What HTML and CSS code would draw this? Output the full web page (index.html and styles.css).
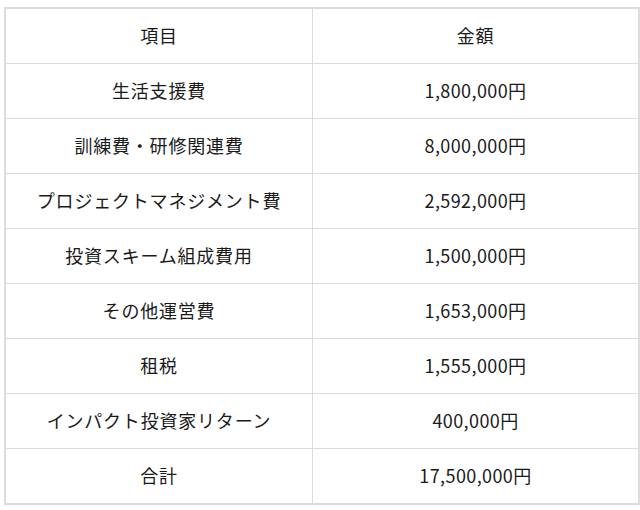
FILE: index.html
```html
<!DOCTYPE html>
<html lang="ja">
<head>
<meta charset="utf-8">
<link rel="stylesheet" href="styles.css">
</head>
<body>
<table class="budget">
  <thead>
    <tr><th class="item">項目</th><th class="amount">金額</th></tr>
  </thead>
  <tbody>
    <tr><td>生活支援費</td><td>1,800,000円</td></tr>
    <tr><td>訓練費・研修関連費</td><td>8,000,000円</td></tr>
    <tr><td>プロジェクトマネジメント費</td><td>2,592,000円</td></tr>
    <tr><td>投資スキーム組成費用</td><td>1,500,000円</td></tr>
    <tr><td>その他運営費</td><td>1,653,000円</td></tr>
    <tr><td>租税</td><td>1,555,000円</td></tr>
    <tr><td>インパクト投資家リターン</td><td>400,000円</td></tr>
    <tr><td>合計</td><td>17,500,000円</td></tr>
  </tbody>
</table>
</body>
</html>
```
FILE: styles.css
```css
html, body {
  margin: 0;
  padding: 0;
  background: #ffffff;
}
body {
  padding: 7px 0 0 4px;
  font-family: "Noto Sans CJK JP", "Noto Sans", sans-serif;
  color: #1a1a1a;
}
.budget {
  border-collapse: collapse;
  width: 631px;
  table-layout: fixed;
  border: 2px solid #dcdcdc;
}
.budget th, .budget td {
  border: 1px solid #dcdcdc;
  height: 54px;
  padding: 0;
  text-align: center;
  vertical-align: middle;
  font-size: 18px;
  letter-spacing: 0.8px;
  font-weight: normal;
  line-height: 1.2;
}
.budget td:nth-child(2) {
  letter-spacing: 0.4px;
}
.item { width: 306px; }
.amount { width: 325px; }
```
